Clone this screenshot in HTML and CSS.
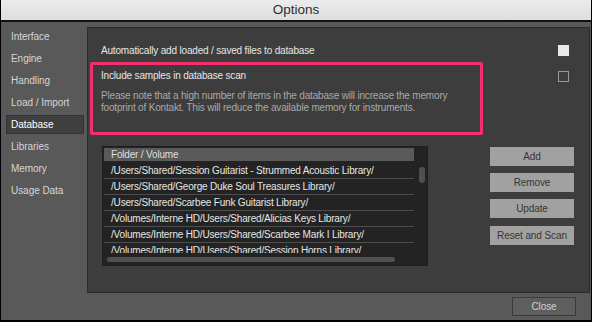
FILE: index.html
```html
<!DOCTYPE html>
<html lang="en">
<head>
    <meta charset="UTF-8">
    <title>Options</title>
    <link rel="stylesheet" href="styles.css">
</head>
<body>
    <div class="window">
        <div class="titlebar">Options</div>
        <div class="window-body">
            <div class="main">
                <ul class="sidebar">
                    <li>Interface</li>
                    <li>Engine</li>
                    <li>Handling</li>
                    <li>Load / Import</li>
                    <li class="active">Database</li>
                    <li>Libraries</li>
                    <li>Memory</li>
                    <li>Usage Data</li>
                </ul>

                <section class="panel">
                    <div class="option-row">
                        <span class="label">Automatically add loaded / saved files to database</span>
                        <span class="checkbox checked"></span>
                    </div>

                    <div class="option-row note-row">
                        <div class="note">
                            <div class="label">Include samples in database scan</div>
                            <p class="hint">Please note that a high number of items in the database will increase the memory<br>footprint of Kontakt. This will reduce the available memory for instruments.</p>
                        </div>
                        <span class="checkbox"></span>
                    </div>

                    <div class="library">
                        <div class="list">
                            <div class="list-main">
                                <div class="list-head">Folder / Volume</div>
                                <div class="list-rows">
                                    <div class="list-row">/Users/Shared/Session Guitarist - Strummed Acoustic Library/</div>
                                    <div class="list-row">/Users/Shared/George Duke Soul Treasures Library/</div>
                                    <div class="list-row">/Users/Shared/Scarbee Funk Guitarist Library/</div>
                                    <div class="list-row">/Volumes/Interne HD/Users/Shared/Alicias Keys Library/</div>
                                    <div class="list-row">/Volumes/Interne HD/Users/Shared/Scarbee Mark I Library/</div>
                                    <div class="list-row">/Volumes/Interne HD/Users/Shared/Session Horns Library/</div>
                                </div>
                            </div>
                            <div class="vscroll"><span class="thumb"></span></div>
                            <div class="hscroll"><span class="thumb"></span></div>
                        </div>

                        <div class="actions">
                            <button class="btn">Add</button>
                            <button class="btn">Remove</button>
                            <button class="btn">Update</button>
                            <button class="btn reset">Reset and Scan</button>
                        </div>
                    </div>
                </section>
            </div>

            <div class="footer">
                <button class="close-btn">Close</button>
            </div>
        </div>
    </div>
</body>
</html>
```

FILE: styles.css
```css
:root {
    --window-bg: #595959;
    --panel-bg: #3d3d3d;
    --panel-border: #2c2c2c;
    --text-light: #e6e6e6;
    --text-dim: #a9a9a9;
    --highlight: #f2306c;
}

* {
    margin: 0;
    padding: 0;
    box-sizing: border-box;
}

body {
    width: 592px;
    height: 322px;
    overflow: hidden;
    background: #000;
    font-family: 'Liberation Sans', Arial, sans-serif;
    font-size: 10px;
    letter-spacing: -0.18px;
    color: var(--text-light);
}

.window {
    width: 592px;
    height: 322px;
    display: flex;
    flex-direction: column;
    border: 1px solid #000;
    border-top: none;
    border-bottom-width: 2px;
}

.titlebar {
    height: 22px;
    line-height: 20px;
    text-align: center;
    font-size: 13.5px;
    letter-spacing: 0;
    color: #2e2e2e;
    background: linear-gradient(#ececec, #dddddd);
    border-bottom: 2px solid #111;
}

.window-body {
    flex: 1;
    display: flex;
    flex-direction: column;
    background: var(--window-bg);
}

.main {
    display: flex;
    padding-top: 5px;
    padding-right: 1px;
}

/* left navigation */
.sidebar {
    list-style: none;
    width: 86px;
    padding-left: 5px;
}

.sidebar li {
    width: 78px;
    height: 19px;
    line-height: 17px;
    margin-bottom: 3px;
    padding-left: 4px;
    border: 1px solid transparent;
    color: #d6d6d6;
    letter-spacing: -0.05px;
}

.sidebar li.active {
    background: #3f3f3f;
    border-color: #333;
    color: #fff;
}

/* settings panel */
.panel {
    flex: 1;
    height: 266px;
    background: var(--panel-bg);
    border: 1px solid var(--panel-border);
    padding: 17px 20px 0 13px;
}

.option-row {
    display: flex;
    justify-content: space-between;
    align-items: center;
    height: 11px;
    line-height: 11px;
}

.checkbox {
    width: 11px;
    height: 11px;
    border: 1px solid #9a9a9a;
}

.checkbox.checked {
    background: #e8e8e8;
    border-color: #e8e8e8;
}

.note-row {
    height: auto;
    align-items: flex-start;
    margin-top: 6px;
}

.note-row .checkbox {
    margin-top: 9px;
}

.note {
    width: 393px;
    height: 73px;
    margin-left: -11px;
    padding: 5px 0 0 8px;
    border: 3px solid var(--highlight);
    border-radius: 2px;
}

.note .label {
    line-height: 12px;
}

.hint {
    margin-top: 8px;
    line-height: 12px;
    color: var(--text-dim);
}

/* library list */
.library {
    display: flex;
    margin-top: 11px;
    margin-right: -5px;
}

.list {
    width: 326px;
    height: 120px;
    margin-left: 1px;
    padding: 1px;
    background: #232323;
    border: 1px solid #1d1d1d;
    display: grid;
    grid-template-columns: 310px 1fr;
    grid-template-rows: 105px 1fr;
}

.list-main {
    overflow: hidden;
}

.list-head {
    height: 13px;
    line-height: 13px;
    padding-left: 7px;
    background: #5a5a5a;
    color: #dedede;
}

.list-rows {
    padding-top: 2px;
}

.list-row {
    height: 16px;
    line-height: 15px;
    padding-left: 7px;
    white-space: nowrap;
    border-bottom: 1px solid #4d4d4d;
}

.vscroll .thumb,
.hscroll .thumb {
    display: block;
    background: #4f4f4f;
    border-radius: 3px;
}

.vscroll .thumb {
    width: 6px;
    height: 16px;
    margin: 19px 0 0 5px;
}

.hscroll {
    grid-column: 1 / 3;
}

.hscroll .thumb {
    width: 288px;
    height: 5px;
    margin: 4px 0 0 3px;
}

.actions {
    display: flex;
    flex-direction: column;
    margin-left: auto;
    margin-top: 1px;
}

.btn {
    width: 84px;
    height: 19px;
    margin-bottom: 7px;
    border: none;
    background: #a1a1a1;
    color: #363636;
    font-family: inherit;
    font-size: 10px;
    letter-spacing: -0.1px;
}

.btn.reset {
    margin-top: 1px;
}

/* bottom bar */
.footer {
    display: flex;
    justify-content: flex-end;
    padding: 4px 15px 0 0;
}

.close-btn {
    width: 64px;
    height: 19px;
    background: #5e5e5e;
    border: 1px solid #3a3a3a;
    color: #cfcfcf;
    font-family: inherit;
    font-size: 10px;
    letter-spacing: -0.1px;
}
```
